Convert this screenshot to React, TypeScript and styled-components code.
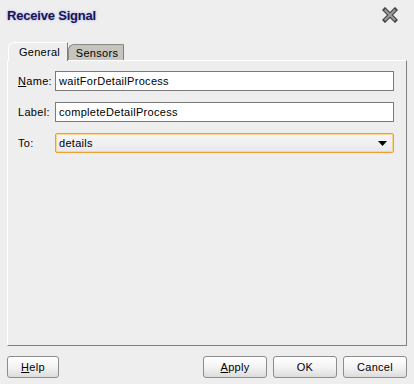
import React from "react";
import styled, { createGlobalStyle } from "styled-components";

const Global = createGlobalStyle`
  html, body { margin: 0; padding: 0; background: #eeeeee; }
  body { font-family: "Liberation Sans", Arial, sans-serif; font-size: 11px; color: #000; }
`;

const Dialog = styled.div`
  width: 414px;
  height: 384px;
  box-sizing: border-box;
  background: #eeeeee;
  display: flex;
  flex-direction: column;
  padding: 0 7px 6px 7px;
  letter-spacing: 0.3px;
`;

const TitleBar = styled.div`
  height: 30px;
  display: flex;
  align-items: center;
  justify-content: space-between;
`;

const Title = styled.div`
  font-family: "Liberation Sans", Arial, sans-serif;
  font-weight: bold;
  font-size: 13px;
  color: #14144e;
  text-shadow: 0 0 3px #b8b8f0, 0 0 2px #c8c8f8;
  letter-spacing: -0.2px;
`;

const CloseBtn = styled.div`
  width: 16px;
  height: 16px;
  margin-right: 9px;
  display: flex;
  align-items: center;
  justify-content: center;
`;

const TabStrip = styled.div`
  margin-top: 12px;
  height: 18px;
  display: flex;
  align-items: flex-end;
  padding-left: 1px;
  position: relative;
  z-index: 1;
`;

const Tab = styled.div<{ $active?: boolean }>`
  box-sizing: border-box;
  width: ${(p) => (p.$active ? "60px" : "56px")};
  height: ${(p) => (p.$active ? "19px" : "16px")};
  margin-bottom: ${(p) => (p.$active ? "-1px" : "0")};
  padding-left: ${(p) => (p.$active ? "3px" : "2px")};
  display: flex;
  align-items: center;
  justify-content: center;
  background: ${(p) => (p.$active ? "#eeeeee" : "#c5c5bd")};
  border-top: 1px solid ${(p) => (p.$active ? "#ffffff" : "#8a8a84")};
  border-left: 1px solid ${(p) => (p.$active ? "#ffffff" : "#8a8a84")};
  border-right: 1px solid #808080;
  border-radius: 6px 1px 0 0;
  font-size: 11px;
  color: #000;
`;

const Panel = styled.div`
  flex: 1;
  box-sizing: border-box;
  border-top: 1px solid #ffffff;
  border-left: 1px solid #ffffff;
  border-right: 1px solid #808080;
  border-bottom: 1px solid #808080;
  padding: 10px 12px 0 10px;
  display: flex;
  flex-direction: column;
  gap: 11px;
`;

const Row = styled.div`
  display: flex;
  align-items: center;
  height: 20px;
`;

const Label = styled.div`
  width: 37px;
  font-size: 11px;
  color: #000;
`;

const Input = styled.div`
  flex: 1;
  box-sizing: border-box;
  height: 20px;
  border: 1px solid #7a7a7a;
  background: #ffffff;
  padding: 0 3px;
  display: flex;
  align-items: center;
  font-size: 11px;
`;

const Select = styled.div`
  flex: 1;
  box-sizing: border-box;
  height: 20px;
  border: 1px solid #f0a030;
  box-shadow: inset 0 0 0 1px #fcd690;
  border-radius: 2px;
  background: linear-gradient(#f6f6f6, #e9e9ee);
  padding: 0 6px 0 3px;
  display: flex;
  align-items: center;
  justify-content: space-between;
  font-size: 11px;
`;

const Footer = styled.div`
  margin-top: 10px;
  height: 22px;
  display: flex;
  align-items: center;
`;

const RightButtons = styled.div`
  margin-left: auto;
  display: flex;
  gap: 6px;
`;

const Button = styled.div<{ $w: number }>`
  box-sizing: border-box;
  width: ${(p) => p.$w}px;
  height: 22px;
  border: 1px solid #8c8c8c;
  border-radius: 3px;
  background: linear-gradient(#ffffff 0%, #f4f4f4 50%, #dcdcdc 100%);
  display: flex;
  align-items: center;
  justify-content: center;
  font-size: 11px;
  color: #000;
`;

const U = styled.span`
  text-decoration: underline;
`;

export default function App() {
  return (
    <>
      <Global />
      <Dialog>
        <TitleBar>
          <Title>Receive Signal</Title>
          <CloseBtn>
            <svg width="16" height="16" viewBox="0 0 16 16">
              <path d="M3 3 L13 13 M13 3 L3 13" stroke="#444" strokeWidth="4.4" strokeLinecap="square" />
              <path d="M3.5 3.5 L12.5 12.5 M12.5 3.5 L3.5 12.5" stroke="#9a9a9a" strokeWidth="2.2" strokeLinecap="square" />
            </svg>
          </CloseBtn>
        </TitleBar>
        <TabStrip>
          <Tab $active>General</Tab>
          <Tab>Sensors</Tab>
        </TabStrip>
        <Panel>
          <Row>
            <Label>
              <U>N</U>ame:
            </Label>
            <Input>waitForDetailProcess</Input>
          </Row>
          <Row>
            <Label>Label:</Label>
            <Input>completeDetailProcess</Input>
          </Row>
          <Row>
            <Label>To:</Label>
            <Select>
              <span>details</span>
              <svg width="9" height="5" viewBox="0 0 9 5">
                <path d="M0 0 L9 0 L4.5 5 Z" fill="#000" />
              </svg>
            </Select>
          </Row>
        </Panel>
        <Footer>
          <Button $w={52}>
            <span>
              <U>H</U>elp
            </span>
          </Button>
          <RightButtons>
            <Button $w={64}>
              <span>
                <U>A</U>pply
              </span>
            </Button>
            <Button $w={64}>OK</Button>
            <Button $w={64}>Cancel</Button>
          </RightButtons>
        </Footer>
      </Dialog>
    </>
  );
}
